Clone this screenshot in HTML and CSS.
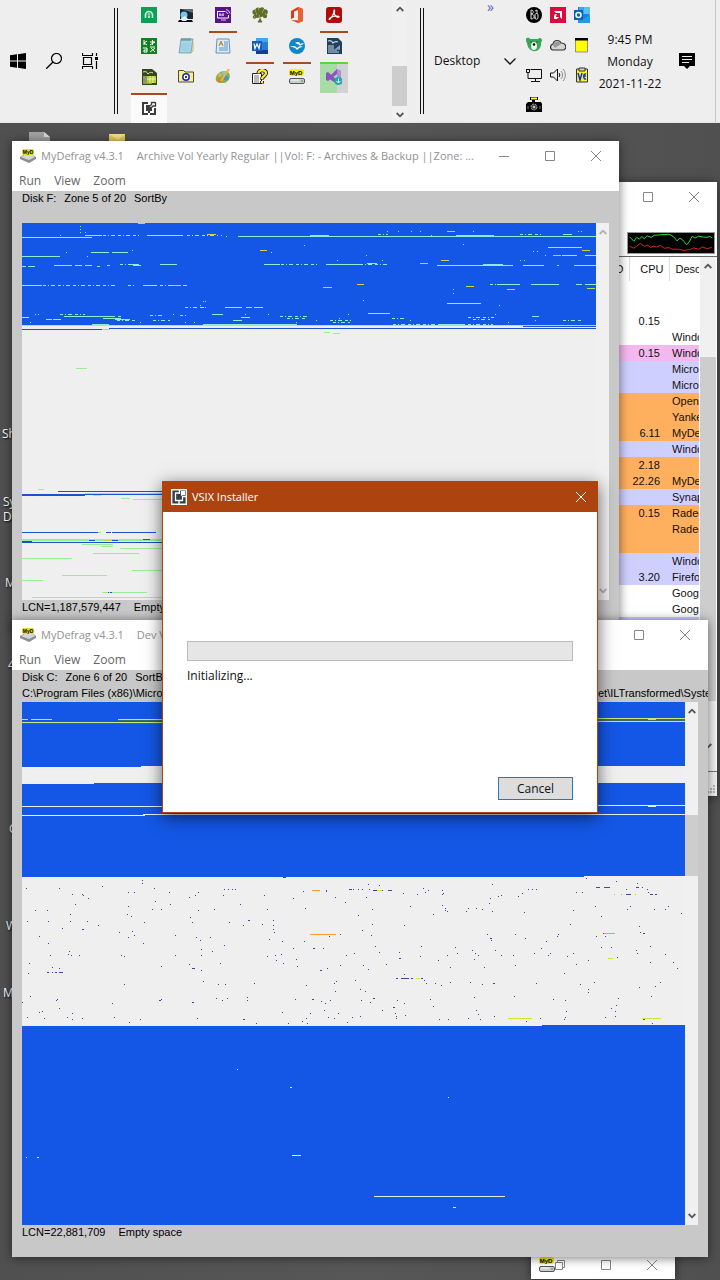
FILE: index.html
```html
<!DOCTYPE html>
<html lang="en">
<head>
<meta charset="utf-8">
<title>Desktop</title>
<link rel="stylesheet" href="styles.css">
</head>
<body>
<svg class="defs" aria-hidden="true">
  <symbol id="myd" viewBox="0 0 16 16"><rect width="15" height="7" rx="2" fill="#f3ef12"/><text x="7" y="6" class="myd-text">MyD</text><rect x=".5" y="9.500" width="15" height="5" rx="1.500" fill="#c9ced0" stroke="#555"/><path d="M2 11h8" stroke="#fff"/><path d="M12 12h2" stroke="#2c9a2c"/></symbol>
  <symbol id="disk" viewBox="0 0 16 16"><path d="M0 9l5-3h7l4 3v2l-7 4-9-4z" fill="#8c8f8c"/><path d="M1 9l5-3h6l3 3-6 3z" fill="#d5d8d2"/><rect x="2" y="1" width="12" height="6" rx="2" fill="#e9e222"/><text x="8" y="6" class="disk-text">MyD</text></symbol>
  <symbol id="min" viewBox="0 0 10 10"><path d="M0 5.500h10" fill="none" stroke="currentColor"/></symbol>
  <symbol id="max" viewBox="0 0 10 10"><path d="M.5 .5h9v9h-9z" fill="none" stroke="currentColor"/></symbol>
  <symbol id="close" viewBox="0 0 10 10"><path d="M0 0l10 10M10 0L0 10" fill="none" stroke="currentColor"/></symbol>
  <symbol id="restore" viewBox="0 0 10 10"><path d="M.5 2.500h7v7h-7zM2.500 2.500v-2h7v7h-2" fill="none" stroke="currentColor"/></symbol>
  <symbol id="up" viewBox="0 0 8 6"><path d="M.7 5L4 1.700 7.300 5" fill="none" stroke="currentColor" stroke-width="1.800"/></symbol>
  <symbol id="down" viewBox="0 0 8 6"><path d="M.7 1L4 4.300 7.300 1" fill="none" stroke="currentColor" stroke-width="1.800"/></symbol>
</svg>

<header class="taskbar">
  <nav class="system" aria-label="System">
    <button aria-label="Start"><svg viewBox="0 0 16 16"><path d="M0 2.300l7-1v6.200H0zM8 1.200L16 0v7.500H8zM0 8.500h7v6.200l-7-1zM8 8.500h8V16l-8-1.200z"/></svg></button>
    <button aria-label="Search"><svg viewBox="0 0 16 16"><circle cx="10.500" cy="5.500" r="5" fill="none" stroke="#000" stroke-width="1.200"/><path d="M7 9l-7 7" stroke="#000" stroke-width="1.300"/></svg></button>
    <button aria-label="Task view"><svg viewBox="0 0 16 16"><path d="M.5 0v2.500h10V0M.5 16v-2.500h10V16M1.500 4.500h8v7h-8zM14.500 0v3M14.500 8v8" fill="none" stroke="#000" stroke-width="1.200"/><path d="M13 4h3v3h-3z"/></svg></button>
  </nav>
  <div class="grip"></div>
  <div class="apps">
    <button aria-label="Green app"><svg viewBox="0 0 16 16"><path d="M0 0h16v16H0z" fill="#0c9f55"/><path d="M4.500 11V8a3.500 3.500 0 0 1 7 0v3M8 11V8.500" fill="none" stroke="#d9f5e5" stroke-width="1.600"/><circle cx="8" cy="7" r="1.500" fill="#7ed0a5"/></svg></button>
    <button aria-label="Remote viewer"><svg viewBox="0 0 16 16"><path d="M2 2h13v10H2z" fill="#1d252c"/><path d="M3 2h12v4z" fill="#5d6a74"/><path d="M1 13h13l1 2H0z" fill="#0b0d10"/><circle cx="6" cy="8" r="3.500" fill="#78c5eb"/><path d="M3 11l4-2 3 3-2 2H4z" fill="#e0f2fb"/></svg></button>
    <button aria-label="Media player"><svg viewBox="0 0 16 16"><path d="M0 0h16v16H0z" fill="#5b1485"/><path d="M2.500 4.500h8M2.500 4v7h11V8" fill="none" stroke="#fff"/><path d="M4 8h5M6 13h5M5 6v3M8 6v3M11 5a3 3 0 0 1 2 2M11 2.500a5 5 0 0 1 4 4" stroke="#e8c7fb" fill="none"/></svg></button>
    <button aria-label="Family tree"><svg viewBox="0 0 16 16"><path d="M8 6v6l-2 3h4l-2-3" fill="#75613c" stroke="#75613c"/><g fill="#5e7028"><circle cx="3" cy="5" r="2.600"/><circle cx="6" cy="3" r="2.600"/><circle cx="10" cy="2.500" r="2.300"/><circle cx="13" cy="5" r="2.800"/><circle cx="9" cy="7" r="3"/><circle cx="5" cy="8" r="3"/><circle cx="2.500" cy="10" r="1.800"/><circle cx="13" cy="9" r="2.200"/></g><path d="M3 4h1M6 2h1M10 5h1M13 7h1M7 9h1M4 7h1M11 3h1M2 10h1" stroke="#c5cf96"/></svg></button>
    <button aria-label="Office"><svg viewBox="0 0 16 16"><path d="M2 4l7-4 5 2v12l-5 2-7-3 7 .5V3L5 4.500v6.300L2 12z" fill="#dc3b13"/><path d="M9 0l5 2v12l-5 2z" fill="#ea6131"/></svg></button>
    <button aria-label="Acrobat"><svg viewBox="0 0 16 16"><rect width="16" height="16" rx="3" fill="#b30b0b"/><path d="M3 12c2 0 5-5 5-8 0-2 1-1 .5 1C7.500 8 11 11 13 10c1-1-5-2-9 1-2 2 0 2 1 0" fill="none" stroke="#fff" stroke-width="1.100"/></svg></button>

    <button aria-label="Translator"><svg viewBox="0 0 16 16"><path d="M0 0h16v16H0z" fill="#138022"/><path d="M3 2v5M6 3L3 5l3 2M9 4h5M11.500 2v5M9 7l5-3M2 10h4v4H3v-2h3M9 9h5M9 14l5-4M10 10l4 4" fill="none" stroke="#fff"/></svg></button>
    <button aria-label="Notepad"><svg viewBox="0 0 16 16"><path d="M3 1h12l-2 14H1z" fill="#a5d6ea" stroke="#608e9d" stroke-width=".7"/><path d="M4 0v3M6 0v3M8 0v3M10 0v3M12 0v3" stroke="#4e696e" stroke-width=".8"/><path d="M3 6h9M3 8h9M2 10h9M2 12h9" stroke="#8cbfd3" stroke-width=".5"/><path d="M13 15l2-2V4" stroke="#dcab61" fill="none"/></svg></button>
    <button class="running" aria-label="WordPad"><svg viewBox="0 0 16 16"><path d="M2 1h12l1 14H1z" fill="#d9edf9" stroke="#6b91b4"/><path d="M4 8l2-5 2 5M5 6h2" fill="none" stroke="#c57824"/><path d="M9 4h4M9 6h4M9 8h4M4 10h9M4 12h9" stroke="#5d92bb"/></svg></button>
    <button aria-label="Word"><svg viewBox="0 0 16 16"><path d="M4 0h12v16H4z" fill="#2b7cd3"/><path d="M4 0h12v4H4z" fill="#41a5ee"/><path d="M4 12h12v4H4z" fill="#103f91"/><path d="M0 3h10v10H0z" fill="#185abd"/><path d="M2 5.500l1 5 2-4.500 2 4.500 1-5" fill="none" stroke="#fff" stroke-width="1.200"/></svg></button>
    <button aria-label="OpenOffice"><svg viewBox="0 0 16 16"><circle cx="8" cy="8" r="8" fill="#0f87c5"/><path d="M6 5c3-2 5-1 5 1 2-1 3-1 4 0-2 0-3 1-4 2-1-2-3-2-5-3zM1 9c3-2 6-1 7 1 2-2 4-2 6-1-3 0-4 1-6 3-2-3-4-3-7-3z" fill="#fff"/></svg></button>
    <button class="running" aria-label="OpenOffice Writer"><svg viewBox="0 0 16 16"><path d="M1 0h11l4 4v12H1z" fill="#223e5b"/><path d="M2 3c3-1 4 0 5 2 2-2 3-2 5-1M2 8h6M2 10h6M2 12h9M2 14h11" fill="none" stroke="#c8d8e4" stroke-width="1.200"/><path d="M9 11l5-4v5z" fill="#86a5bc"/></svg></button>

    <button aria-label="OpenOffice Calc"><svg viewBox="0 0 16 16"><path d="M1 0h10l5 4v12H1z" fill="#364817"/><path d="M2 3c3-1 4 0 5 2 2-2 3-2 5-1M2 8h4M2 10h4M2 12h4M2 14h9" fill="none" stroke="#e0e9c3"/><path d="M6 7h9v7H6z" fill="#b3cb24"/><path d="M6 10h9M9 7v7M12 7v7" stroke="#eff4b7"/></svg></button>
    <button aria-label="Photo folder"><svg viewBox="0 0 16 16"><path d="M.5 3V1.500h5L7 3h8.500v10H.5z" fill="#f7ef92" stroke="#4f4e33"/><circle cx="8" cy="8" r="3.200" fill="#fff" stroke="#1b28b2" stroke-width="1.500"/><circle cx="8" cy="8" r="1"/></svg></button>
    <button aria-label="Paint"><svg viewBox="0 0 16 16"><path d="M1 8C3 2 10 1 14 4c3 5-2 11-8 10-4 0-6-2-5-6z" fill="#80b55f"/><circle cx="5" cy="6" r="2" fill="#e9b530"/><circle cx="9" cy="4" r="2" fill="#78ccdc"/><circle cx="5" cy="11" r="2.500" fill="#d98329"/><circle cx="11" cy="9" r="2.500" fill="#4b93c8"/><path d="M6 12l8-12" stroke="#efb337" stroke-width="2"/></svg></button>
    <button class="running" aria-label="Help"><svg viewBox="0 0 16 16"><path d="M.5 4.500h9v10h-9z" fill="#fff" stroke="#222"/><path d="M2 7h5M2 9h5M2 11h5M2 13h5" stroke="#777"/><path d="M6.500 4.500c0-4.500 7.500-4 7.500-.5 0 3-4 3-4 6.500M10 12v2.500" fill="none" stroke="#000" stroke-width="4"/><path d="M6.500 4.500c0-4.500 7.500-4 7.500-.5 0 3-4 3-4 6M10 12v2" fill="none" stroke="#ffe824" stroke-width="2.400"/></svg></button>
    <button class="running" aria-label="MyDefrag"><svg><use href="#myd"/></svg></button>
    <button class="running loading" aria-label="Visual Studio Installer"><svg viewBox="0 0 16 16"><path d="M0 4l2-1 9 8V5l-9 7-2-1V4l2 3v2l9-9 4 2v11l-4 2L2 9V7z" fill="#8b51bd"/><path d="M11 0l4 2v8h-4z" fill="#b28be0"/><circle cx="12.500" cy="12" r="4" fill="#19aab4"/><path d="M12.500 9.500v4M10.500 12l2 2 2-2" fill="none" stroke="#fff"/></svg></button>

    <button class="running current" aria-label="VSIX Installer"><svg viewBox="0 0 16 16"><path d="M1 2h6v2H3v9h4v2H1zM9 13h4V8h2v7H9z" fill="#3d3d3d"/><path d="M5 5h4v2h2v4H9v2H7v-2H5z" fill="#3d3d3d"/><path d="M14 2.500h-3.500v2L9 6M14.500 2v4H12l-2 2" fill="none" stroke="#3d3d3d" stroke-width="1.300"/></svg></button>
  </div>
  <div class="scrollbar taskscroll">
    <svg class="arrow"><use href="#up"/></svg><div class="thumb"></div><svg class="arrow"><use href="#down"/></svg>
  </div>
  <div class="grip"></div>
  <div class="toolbar">
    <span class="more">»</span>
    <button class="desk-menu">Desktop<svg viewBox="0 0 12 7"><path d="M.5 .5L6 6 11.500 .5" fill="none" stroke="#111" stroke-width="1.300"/></svg></button>
  </div>
  <div class="tray">
    <svg viewBox="0 0 16 16"><circle cx="8" cy="8" r="8"/><path d="M5 12V3c3 0 3 4 0 4 4 0 4 5 0 5M9 12V8c0-2 3-2 3 0v2c0 3-3 3-3 0M9 4l2-1v4" fill="none" stroke="#ddd"/></svg>
    <svg viewBox="0 0 16 16"><path d="M0 0h16v16H0z" fill="#e0093b"/><path d="M4 4h8v8l-2-2V6H6zM7 7H5l-1 2v3h3l2-2H6V9z" fill="#fff"/></svg>
    <svg viewBox="0 0 16 16"><path d="M4 0h11v14H4z" fill="#1683d6"/><path d="M5 0h5v7H5z" fill="#35a9ec"/><path d="M10 0h6v7h-6z" fill="#54c4ee"/><path d="M4 9l6 3 6-5v9H4z" fill="#229be5"/><path d="M0 3h9v10H0z" fill="#0364b8"/><circle cx="4.500" cy="8" r="2.500" fill="none" stroke="#fff" stroke-width="1.500"/></svg>
    <svg viewBox="0 0 16 16"><path d="M0 2c1-2 4-1 4 0h8c1-2 4-1 4 1 0 1 0 2-1 2 1 12-13 12-14 1C0 5 0 4 0 2z" fill="#38a65b"/><ellipse cx="8" cy="9" rx="3" ry="4" fill="#edf5ee"/><circle cx="8" cy="7.500" r="1.200"/><path d="M4 5h2M10 5h2" stroke="#236b39"/></svg>
    <svg viewBox="0 0 16 16"><path d="M3 13C0 13-.5 8 3 7c1-5 7-4 8-1 6 0 6 7 2 7z" fill="#d5d5d5" stroke="#333" stroke-width="1.200"/><path d="M3 8c2-5 7-3 8-1l-6 4z" fill="#999"/></svg>
    <svg viewBox="0 0 16 16"><path d="M1.500 1.500h12V15h-12z" fill="#ff0" stroke="#555" stroke-width=".6"/><path d="M1 1h13v2.500H1z"/></svg>
    <svg viewBox="0 0 16 16"><path d="M4.500 2.500h11v9h-11M0 2.500h4M.5 2v3.500h3V2M2 5v6.500h5M9.500 12v2M5 14.500h9" fill="none" stroke="#111"/></svg>
    <svg viewBox="0 0 16 16"><path d="M.5 6v4h3l4 4V2L3.500 6z" fill="none" stroke="#111"/><path d="M9 6c1 1 1 3 0 4" fill="none" stroke="#111"/><path d="M11 4c2 2 2 6 0 8M13 2c3 3 3 9 0 12" fill="none" stroke="#888"/></svg>
    <svg viewBox="0 0 16 16"><path d="M2.500 2h11v13h-11z" fill="#f4f23b" stroke="#333"/><path d="M5 1h6v3H5z" fill="#d9d9a0" stroke="#333"/><path d="M4 6l2 7 2-7M12 7c-3-1-3 6 0 5M9 9h3" fill="none" stroke="#1834ba" stroke-width="1.500"/></svg>
    <svg viewBox="0 0 16 16"><path d="M4 0h8v3H9v2h6l1 2v8H0V7l2-2h4V3H4z"/><path d="M5 1.500h6" stroke="#ff3" stroke-width="2"/><circle cx="8" cy="10" r="3" fill="#444" stroke="#bbb" stroke-width=".8" stroke-dasharray="2 1"/><circle cx="8" cy="10" r="1.300" fill="#bbb"/><path d="M2 9v3M14 9v3" stroke="#777" fill="none"/></svg>
  </div>
  <div class="clock"><span>9:45 PM</span><span>Monday</span><span>2021-11-22</span></div>
  <button class="notify" aria-label="Notifications"><svg viewBox="0 0 16 16"><path d="M0 0h16v13h-5l-3 3-3-3H0z"/><path d="M3 3.500h10M3 6.500h10M3 9.500h7" stroke="#eee"/></svg></button>
</header>

<main class="desktop">
  <svg class="file-icon" viewBox="0 0 21 20"><path d="M0 0h15l6 5v15H0z" fill="#a3a3a3"/><path d="M15 0v5h6z" fill="#ddd"/></svg>
  <svg class="folder-icon" viewBox="0 0 16 20"><path d="M0 0h16v20H0z" fill="#eacb69"/><path d="M0 0h16l-7 6z" fill="#f8df91"/></svg>
  <span class="shortcut s1">Sh</span><span class="shortcut s2">Sy<br>D</span><span class="shortcut s3">M</span><span class="shortcut s4">4</span><span class="shortcut s5">C</span><span class="shortcut s6">W</span><span class="shortcut s7">M</span>

  <section class="window explorer" aria-label="Process list">
    <div class="titlebar"><div class="controls"><button aria-label="Maximize"><svg><use href="#max"/></svg></button><button aria-label="Close"><svg><use href="#close"/></svg></button></div></div>
    <div class="graph-row"><svg class="graph" viewBox="0 0 264 63" preserveAspectRatio="none"><path d="M0 0h264v63H0z"/><path d="M5 12l13 14 9-12 8 5 8-8 7 7 9-9 12 5 10-7 45-3 13 7 12 14 8-9 9 6 12 15 8-9 9-18 9 6 10-6 24 4 12-3 7 5" fill="none" stroke="#2fe33d" stroke-width="3"/><path d="M5 42l13 6 20-15 13 9 10-4 8 8 8-4 11 2 11-5 12 9 15-2 9 5 20 0 17 4 20-3 9-5 16 4 12-7 14 6 14-5" fill="none" stroke="#e7221f" stroke-width="3"/></svg></div>
    <div class="process-area">
      <table class="processes">
        <thead><tr><th>PID</th><th>CPU</th><th>Description</th></tr></thead>
        <tbody>
          <tr><td></td><td></td><td></td></tr>
          <tr><td></td><td></td><td></td></tr>
          <tr><td></td><td>0.15</td><td></td></tr>
          <tr><td></td><td></td><td>Windows</td></tr>
          <tr class="pink"><td></td><td>0.15</td><td>Windows</td></tr>
          <tr class="lilac"><td></td><td></td><td>Microsoft</td></tr>
          <tr class="lilac"><td></td><td></td><td>Microsoft</td></tr>
          <tr class="orange"><td></td><td></td><td>OpenOffice</td></tr>
          <tr class="orange"><td></td><td></td><td>Yankee</td></tr>
          <tr class="orange"><td></td><td>6.11</td><td>MyDefrag</td></tr>
          <tr class="lilac"><td></td><td></td><td>Windows</td></tr>
          <tr class="orange"><td></td><td>2.18</td><td></td></tr>
          <tr class="orange"><td></td><td>22.26</td><td>MyDefrag</td></tr>
          <tr class="lilac"><td></td><td></td><td>Synaptics</td></tr>
          <tr class="orange"><td></td><td>0.15</td><td>Radeon</td></tr>
          <tr class="orange"><td></td><td></td><td>Radeon</td></tr>
          <tr class="orange"><td></td><td></td><td></td></tr>
          <tr class="lilac"><td></td><td></td><td>Windows</td></tr>
          <tr class="lilac"><td></td><td>3.20</td><td>Firefox</td></tr>
          <tr><td></td><td></td><td>Google</td></tr>
          <tr><td></td><td></td><td>Google</td></tr>
          <tr class="lilac"><td></td><td></td><td></td></tr>
        </tbody>
      </table>
      <div class="scrollbar"><svg class="arrow"><use href="#up"/></svg><div class="thumb"></div><svg class="arrow"><use href="#down"/></svg></div>
    </div>
    <div class="grip-row"><svg viewBox="0 0 9 9"><path d="M7 1h2M4 4h2M7 4h2M1 7h2M4 7h2M7 7h2" stroke="#b5b5b5" stroke-width="2"/></svg></div>
  </section>

  <section class="window archive" aria-label="MyDefrag, disk F">
    <div class="titlebar"><svg class="app-icon"><use href="#disk"/></svg><span class="title">MyDefrag v4.3.1</span><span class="title">Archive Vol Yearly Regular ||Vol: F: - Archives &amp; Backup ||Zone: ...</span>
      <div class="controls"><button aria-label="Minimize"><svg><use href="#min"/></svg></button><button aria-label="Maximize"><svg><use href="#max"/></svg></button><button aria-label="Close"><svg><use href="#close"/></svg></button></div></div>
    <nav class="menu"><button>Run</button><button>View</button><button>Zoom</button></nav>
    <div class="content">
      <div class="info"><span>Disk F:</span><span>Zone 5 of 20</span><span>SortBy</span></div>
      <div class="info"></div>
      <div class="map-row">
        <svg class="map" viewBox="0 0 574 377" shape-rendering="crispEdges">
          <path d="M0 0h574v377H0z" fill="#efefef"/><path d="M0 0h574v103H0z" fill="#1457e6"/>
          <g class="marks" transform="translate(-22 -98) scale(.33333333)">
            <g class="aqua"><path d="M66 337.500h210M66 394.500h114M255 331.500h50M440 331.500h108M715 334.500h370M273 382.500h54M336 382.500h48M66 424.500h12M84 424.500h21M162 421.500h54M225 421.500h22M255 421.500h20M390 418.500h26M400 421.500h23M480 418.500h52M791 418.500h50M978 418.500h104M66 481.500h60M430 481.500h40M675 547.500h50M737 547.500h18M762 547.500h28M66 577.500h21M192 574.500h150M310 580.500h54M345 583.500h45M636 568.500h33M722 577.500h28M700 586.500h25M138 583.500h18M160 583.500h24M66 601.500h1020M275 598.500h53M610 598.500h280M930 331.500h57"/>
            <path class="dash" d="M310 331.500h108M560 331.500h95M844 418.500h110M130 481.500h215M360 418.500h60M480 481.500h85M555 547.500h70M180 568.500h75M450 571.500h45M540 571.500h25M310 574.500h60M350 586.500h60M460 586.500h50M840 574.500h80M860 580.500h60M990 586.500h62M1000 592.500h50M385 481.500h20M320 421.500h9M290 424.500h12"/>
            <path class="dots" d="M242 304h0M242 313h0M242 322h0M256 322h0M180 331h0M200 382h0M262 394h0M398 376h0M914 361h0M815 382h0M1012 406h0M610 529h0M616 529h0M601 541h0M610 547h0M106 568h0M115 568h0M91 592h0M205 568h0M420 592h0M520 568h0M556 592h0M583 592h0M735 568h0M805 568h0M890 592h0M950 586h0M1045 568h0M1018 580h0M679 334h0M664 331h0"/></g>
            <path class="yellow" d="M414 295.500h21M622 329h25M780 377h21M968 487h27M517 481.500h24M1070 478h15"/>
            <path class="pale" d="M66 607.500h770M830 610.500h120M950 607.500h135"/><path class="blue" d="M66 613.500h260M327 610.500h758"/><path class="yellow" d="M305 613.500h24"/>
            <path class="green" d="M227 730.500h33M972 622.500h17M1000 625.500h20"/>
          </g>
          <g class="marks" transform="translate(338 -98) scale(.33333333)">
            <g class="aqua"><path d="M0 334.500h708M288 331.500h110M564 367.500h102M608 328.500h27M20 415.500h32M230 421.500h228M370 418.500h60M490 421.500h62M590 421.500h8M642 421.500h66M606 391.500h46M676 391.500h32M410 478.500h24M440 478.500h40M512 478.500h85M648 478.500h18M675 478.500h33M261 535.500h102M24 565.500h66M517 574.500h20M0 601.500h708M240 598.500h75"/>
            <path class="dash" d="M55 328.500h30M480 328.500h70M0 418.500h90M390 478.500h90M323 577.500h80M95 580.500h45M340 583.500h50M610 586.500h58M100 598.500h300"/>
            <path class="dots" d="M82 319h0M115 319h0M154 319h0M181 319h0M214 331h0M340 319h0M400 331h0M655 319h0M664 319h0M520 379h0M532 379h0M556 391h0M280 493h0M280 505h0M418 541h0M10 526h0M19 391h0M67 406h0M406 568h0M526 586h0M310 358h0M482 406h0M493 406h0M151 586h0M445 592h0"/></g>
            <path class="yellow" d="M262 319.500h23M180 415.500h24M242 406.500h25M318 484.500h24M442 493.500h23M667 376.500h23M580 391.500h24M681 490.500h24M0 478.500h12"/>
            <path class="pale" d="M0 607.500h708M520 610v15"/><path class="blue" d="M0 610.500h708M490 604.500h218"/>
          </g>
          <g class="marks" transform="translate(-22 247) scale(.33333333)">
            <path class="blue" d="M175 64.500h400M66 73.500h189M66 76.500h189M245 73.500h300M66 187.500h230M318 187.500h15M336 187.500h132M66 217.500h500M66 214.500h30"/>
            <path class="green" d="M113 58.500h20M255 70.500h260M280 76.500h22M362 85.500h29M400 88.500h90M66 208.500h500M66 211.500h500M245 223.500h95M303 229.500h35M360 235.500h130M280 250.500h138M66 265.500h150M397 301.500h100M185 316.500h137M66 331.500h62M305 367.500h135M95 382.500h400"/>
            <path class="blue" d="M266 211.500h18M336 211.500h18M429 208.500h21M323 367.500h4M331 367.500h4M346 223h0M367 382h0"/><path class="yellow" d="M312 211.500h24M295 187.500h9"/>
          </g>
        </svg>
        <div class="scrollbar disabled"><svg class="arrow"><use href="#up"/></svg><svg class="arrow"><use href="#down"/></svg></div>
      </div>
      <div class="status"><span>LCN=1,187,579,447</span><span>Empty space</span></div>
    </div>
  </section>

  <section class="window peek" aria-label="MyDefrag"><div class="titlebar"><svg class="app-icon"><use href="#myd"/></svg><div class="controls"><button aria-label="Restore"><svg><use href="#restore"/></svg></button><button aria-label="Maximize"><svg><use href="#max"/></svg></button><button aria-label="Close"><svg><use href="#close"/></svg></button></div></div></section>

  <section class="window dev" aria-label="MyDefrag, disk C">
    <div class="titlebar"><svg class="app-icon"><use href="#disk"/></svg><span class="title">MyDefrag v4.3.1</span><span class="title">Dev Vol</span>
      <div class="controls"><button aria-label="Minimize"><svg><use href="#min"/></svg></button><button aria-label="Maximize"><svg><use href="#max"/></svg></button><button aria-label="Close"><svg><use href="#close"/></svg></button></div></div>
    <nav class="menu"><button>Run</button><button>View</button><button>Zoom</button></nav>
    <div class="content">
      <div class="info"><span>Disk C:</span><span>Zone 6 of 20</span><span>SortBy</span></div>
      <div class="info path"><span>C:\Program Files (x86)\Microsoft</span><span class="tail">et\ILTransformed\System</span></div>
      <div class="map-row">
        <svg class="map" viewBox="0 0 663 523" shape-rendering="crispEdges">
          <path d="M0 0h663v523H0z" fill="#1457e6"/><path d="M0 65h119v-1h544v17H72v1H0zM0 175h562v-1h101v149H520v1H0z" fill="#efefef"/>
          <g class="marks" transform="translate(-22 -2) scale(.33333333)"><path class="lime" d="M66 58.500h18M93 58.500h63M353 58.500h150M66 67.500h430"/><path class="olive" d="M66 70.500h430M353 61.500h143"/><path class="pale" d="M66 319.500h430M66 346.500h370M430 343.500h650"/></g>
          <g class="marks" transform="translate(338 -2) scale(.33333333)"><path class="lime" d="M700 55.500h275M700 64.500h275"/><path class="olive" d="M700 58.500h275M700 61.500h275"/><path class="bright" d="M864 57h24"/><path class="pale" d="M700 316.500h275M864 319.500h24M0 343.500h975"/></g>
          <g class="marks" transform="translate(-22 168) scale(.33333333)">
            <path class="dots navy" d="M80 56h0M179 56h0M428 32h0M428 40h0M307 49h0M218 73h0M248 73h0M251 76h0M266 85h0M386 67h0M403 67h0M463 56h0M508 67h0M595 67h0M568 82h0M586 76h0M466 94h0M511 103h0M458 118h0M485 118h0M595 121h0M643 118h0M670 76h0M674 58h0M685 58h0M697 58h0M706 58h0M794 76h0M721 103h0M803 118h0M227 103h0M386 109h0M106 121h0M142 121h0M211 133h0M381 133h0M394 139h0M571 142h0M577 157h0M433 157h0M211 154h0M262 154h0M146 154h0M83 154h0M295 166h0M187 175h0M248 178h3M358 187h0M397 184h0M403 196h0M386 202h0M118 199h0M146 220h0M430 220h0M526 196h0M589 202h0M601 211h0M631 202h0M604 238h0M637 244h0M604 256h0M673 226h0M688 157h0M730 166h0M745 151h3M787 163h0M820 151h0M820 166h0M820 178h0M823 187h0M808 208h0M848 214h0M880 85h0M910 64h0M979 61h0M979 65h0M1006 82h0M1036 97h0M916 115h0M1048 58h6M1060 58h0M1075 58h0M1075 136h0M1021 193h0M988 199h0M914 214h0M880 235h0M941 235h3M970 235h0M208 244h0M205 253h0M214 256h0M238 256h0M151 256h0M88 280h0M85 310h0M365 256h0M373 259h0M485 289h0M526 256h0M568 283h0M577 295h6M604 301h0M610 334h0M661 280h0M803 259h0M826 256h0M844 253h0M829 271h0M850 280h0M889 268h0M892 289h0M1039 256h0M1063 250h0M1021 286h0M962 301h3M982 295h0M1009 334h0M1003 340h0M1066 331h0M1006 364h0M919 346h0M763 340h0M655 343h0M676 343h0M742 382h0M742 391h0M650 385h0M667 391h0M682 385h0M577 397h3M592 445h0M479 391h3M485 388h0M337 400h0M343 442h0M388 457h0M421 448h0M373 343h0M91 379h0M172 388h0M169 391h0M179 415h0M118 427h0M127 424h0M133 445h0M83 442h0M202 442h0M218 430h0M218 448h0M247 445h0M158 292h0M179 295h0M142 307h3M157 307h0M166 307h3M179 307h8M67 397h0M166 469h0M730 448h3M769 460h0M848 427h0M865 460h0M886 388h0M937 388h3M964 394h0M976 400h0M991 391h0M973 421h0M931 430h0M919 445h0M907 454h0M922 460h0M985 442h0M1003 445h0M1015 430h0M1042 457h0M1057 442h0M850 22h6"/>
            <path class="amber" d="M930 193.500h78M935 61.500h26"/>
          </g>
          <g class="marks" transform="translate(338 168) scale(.33333333)">
            <path class="dots navy" d="M25 43h0M58 46h0M7 58h0M28 58h0M40 62h8M68 62h0M86 62h8M19 82h0M38 118h0M38 163h0M7 181h0M34 196h0M130 70h0M151 109h0M133 166h0M172 73h0M190 55h0M196 67h0M205 61h0M247 61h0M247 73h0M250 70h0M247 106h0M256 115h0M256 121h0M262 124h0M220 133h0M397 43h0M424 76h0M415 79h0M391 85h0M388 100h0M397 124h0M367 118h0M349 115h0M325 115h0M319 124h0M487 70h0M475 79h0M505 58h0M517 58h0M529 58h0M493 127h0M649 67h0M667 67h0M679 25h0M709 52h10M733 52h14M769 34h0M832 40h0M829 52h6M847 52h0M799 58h0M800 73h10M826 73h0M862 58h0M865 67h0M872 73h5M886 73h3M640 121h0M631 163h0M706 109h0M724 139h0M811 109h0M803 118h0M883 118h0M925 109h0M916 118h0M964 130h0M838 169h0M841 187h0M850 190h3M730 190h0M736 199h0M709 199h0M724 232h0M754 232h0M381 193h0M391 205h3M394 211h0M406 241h0M424 256h0M466 193h0M496 205h0M559 214h0M595 193h0M592 199h0M544 235h0M523 250h0M571 250h0M565 256h0M460 256h0M466 286h0M286 232h0M292 250h0M262 256h0M235 271h0M271 292h0M337 241h0M346 250h0M355 256h0M343 268h0M373 292h0M184 229h0M181 259h0M118 247h0M118 265h3M133 313h0M46 229h0M58 247h0M79 283h0M10 286h0M25 298h0M109 325h3M123 325h3M130 325h16M154 325h4M184 325h3M193 331h0M199 340h0M226 340h0M244 346h0M271 337h0M331 337h0M367 343h0M401 340h3M529 340h0M463 379h0M580 388h0M616 391h0M619 424h0M616 442h0M613 448h0M613 310h0M622 259h0M640 250h0M649 283h0M685 271h0M703 337h0M661 343h0M685 358h0M685 367h0M772 262h0M829 241h0M832 250h0M871 229h0M871 277h0M916 253h0M940 277h0M952 295h0M901 337h0M886 349h0M874 379h0M838 352h0M775 385h0M769 406h0M754 415h0M766 424h0M766 439h0M736 442h0M1 358h0M16 364h0M4 391h0M31 397h0M40 385h3M67 421h0M1 439h0M100 412h3M112 391h0M133 400h0M106 430h0M109 439h0M109 445h0M136 436h0M211 388h0M220 409h0M238 448h0M265 448h0M325 445h0M343 382h0M349 421h0M355 433h0M361 448h0M403 439h0M499 454h0M541 445h0M877 460h0M178 469h0"/>
            <path class="amber" d="M732 190.500h34M762 73h3M783 73h3M825 73h3"/><path class="bright" d="M443 445.500h73M847 445.500h57M50 62h15M168 325h12M745 265.500h14"/><path class="navy" d="M850 448h5"/>
          </g>
          <path class="spark" d="M215 367.500h1M268 385.500h2M426 395.500h1M4 455.500h1M15 455.500h2M270 453.500h9M352 494.500h131M431 505.500h3"/>
        </svg>
        <div class="scrollbar"><svg class="arrow"><use href="#up"/></svg><div class="thumb"></div><svg class="arrow"><use href="#down"/></svg></div>
      </div>
      <div class="status"><span>LCN=22,881,709</span><span>Empty space</span></div>
    </div>
  </section>

  <section class="window dialog" role="dialog" aria-label="VSIX Installer">
    <div class="titlebar"><svg class="app-icon" viewBox="0 0 16 16"><path d="M.7 .7h14.600v14.600H.7z" fill="#333e48" stroke="#fff" stroke-width="1.400"/><path d="M8.500 4H4.500v7.500h7V7.500M8 12v3M8.500 1v4M11 7.500h4" fill="none" stroke="#fff" stroke-width="1.300"/><path d="M10 2h4v4h-2l-2 1z" fill="#fff"/></svg><span class="title">VSIX Installer</span><div class="controls"><button aria-label="Close"><svg><use href="#close"/></svg></button></div></div>
    <div class="dialog-body">
      <progress id="install" value="0" max="100"></progress>
      <label for="install">Initializing...</label>
      <button class="cancel">Cancel</button>
    </div>
  </section>
</main>
</body>
</html>
```
FILE: styles.css
```css
* { box-sizing: border-box; }
body {
  margin: 0;
  min-height: 100vh;
  display: flex;
  flex-direction: column;
  font: 12px/16px "Open Sans", "Noto Sans", sans-serif;
  color: #111;
}
button { border: 0; padding: 0; background: none; font: inherit; color: inherit; }
svg { display: block; flex: none; }
.defs { display: none; }
.myd-text { font: bold 6px "Liberation Sans", sans-serif; text-anchor: middle; }
.disk-text { font: bold 5px "Liberation Sans", sans-serif; text-anchor: middle; }

/* Taskbar */
.taskbar { display: flex; height: 123px; background: #eee; border-bottom: 1px solid #e6e6e6; }
.system { display: flex; align-items: center; gap: 20px; padding: 0 16px 0 10px; }
.system svg, .apps svg, .tray svg, .notify svg { width: 16px; height: 16px; }
.grip { width: 4px; margin: 8px 0; border: solid #111; border-width: 0 1px; flex: none; }
.apps { flex: 1; display: grid; grid-template-columns: repeat(6, 37px); grid-auto-rows: 31px; margin-left: 13px; }
.apps button { width: 28px; margin: 0 4px; display: flex; align-items: center; justify-content: center; border: solid transparent; border-width: 2px 0 3px; }
.apps .running { border-top-color: #a94b20; }
.apps .loading { background: linear-gradient(90deg, #a9dba7 60%, #d2d2d2 60%); border-top-color: #5ad73f; }
.apps .current { width: 36px; margin: 0; background: #fafafa; }
.scrollbar { display: flex; flex-direction: column; align-items: center; justify-content: space-between; background: #f0f0f0; color: #555; flex: none; padding: 6px 0; }
.scrollbar .arrow { width: 8px; height: 6px; }
.scrollbar .thumb { width: 100%; background: #cdcdcd; }
.scrollbar.disabled { color: #b0b0b0; }
.taskscroll { width: 15px; margin-right: 13px; padding: 6px 0 4px; }
.taskscroll .thumb { height: 40px; margin: auto 0 6px; }
.toolbar { width: 98px; display: grid; grid-template-rows: 14px 1fr 14px; padding: 0 6px 0 10px; }
.more { justify-self: end; margin-right: 22px; font-size: 14px; line-height: 14px; color: #6464a4; }
.desk-menu { display: flex; align-items: center; justify-content: space-between; }
.desk-menu svg { width: 12px; height: 7px; }
.tray { display: grid; grid-template-columns: repeat(3, 24px); grid-auto-rows: 30px; place-items: center; align-content: start; }
.clock { width: 72px; padding-top: 29px; display: flex; flex-direction: column; text-align: center; line-height: 22px; }
.notify { width: 50px; padding-left: 13px; border-right: 1px solid #c6c6c6; margin-right: 4px; }

/* Desktop */
.desktop { flex: 1; position: relative; overflow: hidden; background: linear-gradient(90deg, #505050, #575757 50%, #505050); }
.file-icon, .folder-icon { position: absolute; height: 20px; }
.file-icon { left: 29px; top: 9px; width: 21px; }
.folder-icon { left: 109px; top: 11px; width: 16px; }
.shortcut { position: absolute; color: #fff; line-height: 15px; text-shadow: 1px 1px 2px #000; }
.s1 { left: 2px; top: 303px; }
.s2 { left: 3px; top: 371px; }
.s3 { left: 5px; top: 452px; }
.s4 { left: 8px; top: 534px; }
.s5 { left: 9px; top: 698px; }
.s6 { left: 6px; top: 795px; }
.s7 { left: 3px; top: 862px; }

/* Windows */
.window { position: absolute; background: #fff; box-shadow: 0 1px 10px #0008; overflow: hidden; }
.titlebar { display: flex; align-items: center; height: 30px; padding-left: 8px; white-space: nowrap; color: #929292; }
.app-icon { width: 16px; height: 16px; margin-right: 5px; }
.title { font-size: 11px; }
.title + .title { margin-left: 13px; }
.controls { margin-left: auto; display: flex; flex: none; height: 100%; color: #868686; }
.controls button { width: 46px; display: grid; place-items: center; }
.controls svg { width: 10px; height: 10px; }
.menu { display: flex; gap: 13px; height: 20px; padding-left: 7px; color: #666; }
.content { background: #c8c8c8; padding: 0 10px 18px; font: 11px/14px "Liberation Sans", sans-serif; color: #000; }
.info { display: flex; gap: 8px; height: 16px; white-space: nowrap; }
.path { margin-right: -10px; }
.path .tail { margin-left: auto; width: 110px; }
.map-row { display: flex; }
.map { flex: 1; min-width: 0; height: auto; }
.map-row .scrollbar { width: 13px; }
.status { display: flex; gap: 13px; white-space: nowrap; }
.marks { fill: none; stroke-width: 3; }
.marks .dots { stroke-linecap: square; }
.aqua { stroke: #88efd0; }
.dash { stroke-dasharray: 9 6 3 6 12 9; }
.yellow { stroke: #c9d743; }
.bright { stroke: #dce032; }
.green { stroke: #98ef92; }
.blue { stroke: #1b50cf; }
.pale { stroke: #e4f2ee; }
.lime { stroke: #cae87c; }
.olive { stroke: #406b63; }
.navy { stroke: #3c499c; }
.amber { stroke: #efa22d; }
.spark { stroke: #d8f5d0; }

.archive { left: 12px; right: 101px; top: 18px; }
.dev { left: 12px; right: 12px; top: 497px; }
.dev .map-row .thumb { height: 61px; margin: 101px 0 auto; }

.explorer { left: 560px; right: 3px; top: 59px; }
.graph-row { display: flex; justify-content: flex-end; margin-top: 20px; height: 25px; padding-right: 2px; border-bottom: 1px solid #666; }
.graph { width: 88px; height: 22px; border: 1px solid #999; }
.process-area { display: flex; height: 514px; overflow: hidden; padding-right: 1px; }
.process-area .scrollbar { width: 17px; border-left: 1px solid #fff; margin-left: auto; padding-bottom: 22px; }
.process-area .thumb { height: 344px; margin: 88px 0 auto; }
.processes { width: 139px; table-layout: fixed; border-collapse: collapse; font: 11px/16px "Liberation Sans", sans-serif; align-self: flex-start; }
.processes th { height: 24px; padding: 0; font-weight: normal; border-right: 1px solid #ddd; text-align: right; padding-right: 5px; }
.processes th:nth-child(1) { width: 69px; }
.processes th:nth-child(2) { width: 40px; }
.processes td { height: 16px; padding: 0; overflow: hidden; white-space: nowrap; }
.processes td:nth-child(2) { text-align: right; padding-right: 9px; }
.processes td:nth-child(3) { padding-left: 3px; }
.processes th:nth-child(3) { text-align: left; padding: 0 0 0 6px; overflow: hidden; border: 0; }
.pink { background: #f3b9ef; }
.lilac { background: #cfcfff; }
.orange { background: #ffb05e; }
.grip-row { display: flex; justify-content: flex-end; align-items: flex-end; height: 25px; padding: 2px; background: #f0f0f0; border-top: 1px solid #777; }
.grip-row svg { width: 9px; height: 9px; }

.peek { left: 531px; right: 45px; top: 1127px; }
.peek .titlebar { height: 29px; }
.peek .app-icon { margin-right: 0; }
.peek .titlebar .controls { margin-left: -18px; }

.dialog { left: 162px; right: 122px; top: 358px; border: 1px solid #ad450f; box-shadow: 0 4px 16px #0009; }
.dialog .titlebar { background: #ad430e; color: #fff; }
.dialog .controls { color: #fff; }
.dialog .controls button { width: 32px; }
.dialog-body { display: flex; flex-direction: column; padding: 129px 24px 12px; }
.dialog-body progress { width: 100%; height: 20px; appearance: none; background: #e6e6e6; border: 1px solid #bcbcbc; }
.dialog-body progress::-webkit-progress-bar { background: #e6e6e6; }
.dialog-body label { margin: 7px 0 93px; }
.cancel { align-self: flex-end; width: 75px; height: 23px; background: #ddd; border: 1px solid #2878b8; }
```
